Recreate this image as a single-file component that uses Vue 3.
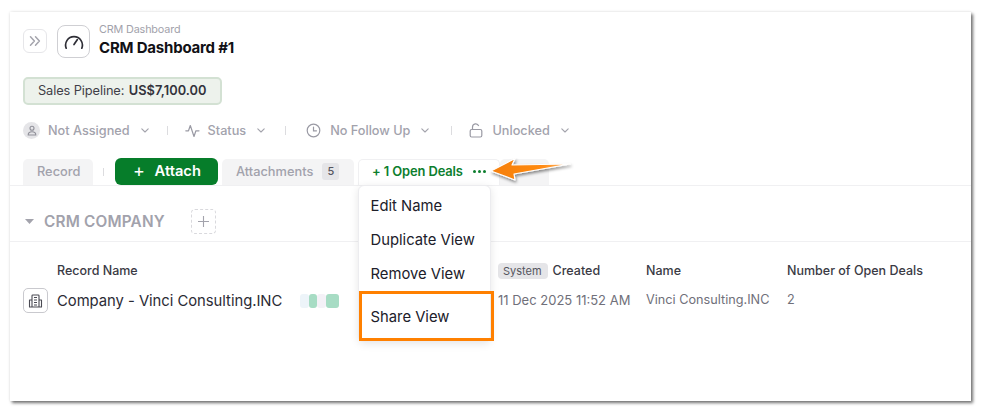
<script setup>
const filters = [
  { label: 'Not Assigned', icon: 'user' },
  { label: 'Status', icon: 'pulse' },
  { label: 'No Follow Up', icon: 'clock' },
  { label: 'Unlocked', icon: 'lock' }
]
const menu = ['Edit Name', 'Duplicate View', 'Remove View', 'Share View']
</script>

<template>
  <div class="page">
    <main class="card">
      <header class="head">
        <button class="toggle" aria-label="Expand">
          <svg width="14" height="14" viewBox="0 0 14 14" fill="none" stroke="#a4a4ac" stroke-width="1.5" stroke-linecap="round" stroke-linejoin="round"><path d="M2.500 2.800 6.400 7l-3.900 4.200M7.500 2.800 11.400 7l-3.900 4.200"/></svg>
        </button>
        <div class="gauge">
          <svg width="20" height="16" viewBox="0 0 20 16" fill="none" stroke="#2e2e36" stroke-width="1.700" stroke-linecap="round"><path d="M2.200 14.200A8.400 8.400 0 1 1 17.800 14.200"/><path d="M10 10.500 13.400 5.600"/></svg>
        </div>
        <div class="titles">
          <div class="crumb">CRM Dashboard</div>
          <div class="title">CRM Dashboard #1</div>
        </div>
      </header>

      <div class="pill">Sales Pipeline: <b>US$7,100.00</b></div>

      <div class="filters">
        <template v-for="(f, i) in filters" :key="f.label">
          <span v-if="i" class="vsep"></span>
          <div class="filter" :class="'f' + i">
            <span v-if="f.icon === 'user'" class="avatar">
              <svg width="10" height="11" viewBox="0 0 10 11" fill="none" stroke="#8f8f98" stroke-width="1.100"><circle cx="5" cy="3.200" r="2"/><path d="M1.200 10c0-2.200 1.600-3.200 3.800-3.200S8.800 7.800 8.800 10z"/></svg>
            </span>
            <svg v-if="f.icon === 'pulse'" width="15" height="15" viewBox="0 0 15 15" fill="none" stroke="#9a9aa4" stroke-width="1.200" stroke-linejoin="round" stroke-linecap="round"><path d="M.8 7.800H3.500L5.300 2.500 9 13.500l1.900-5.700H14"/></svg>
            <svg v-if="f.icon === 'clock'" width="15" height="15" viewBox="0 0 15 15" fill="none" stroke="#9a9aa4" stroke-width="1.200" stroke-linecap="round"><circle cx="7.500" cy="7.500" r="6.300"/><path d="M7.500 4v3.800h3"/></svg>
            <svg v-if="f.icon === 'lock'" width="14" height="15" viewBox="0 0 14 15" fill="none" stroke="#9a9aa4" stroke-width="1.200"><rect x="1.200" y="6.500" width="11.600" height="7.500" rx="1.500"/><path d="M3.500 6.500V4a3.200 3.200 0 0 1 6.200-1"/></svg>
            <span class="flabel">{{ f.label }}</span>
            <svg class="chev" width="8" height="5" viewBox="0 0 8 5" fill="none" stroke="#a3a3ac" stroke-width="1.100" stroke-linecap="round" stroke-linejoin="round"><path d="M.8.8 4 4 7.200.8"/></svg>
          </div>
        </template>
      </div>

      <nav class="tabs">
        <div class="tab record">Record</div>
        <span class="tabsep"></span>
        <button class="attach"><span class="plus">+</span> Attach</button>
        <div class="tab attachments">Attachments <span class="count">5</span></div>
        <div class="tab active">+ 1 Open Deals <span class="dots"><i></i><i></i><i></i></span></div>
        <div class="tab ghost"></div>
      </nav>

      <section class="section">
        <svg class="caret" width="9" height="5" viewBox="0 0 9 5"><path d="M0 0h9L4.500 5z" fill="#a3a3ac"/></svg>
        <span class="sname">CRM COMPANY</span>
        <span class="addbox">
          <svg width="13" height="13" viewBox="0 0 13 13" stroke="#a3a3ac" stroke-width="1.100"><path d="M6.500 1v11M1 6.500h11"/></svg>
        </span>
      </section>

      <div class="table">
        <div class="col c1">
          <div class="th">Record Name</div>
          <div class="td name">
            <span class="building">
              <svg width="15" height="15" viewBox="0 0 15 15" fill="none" stroke="#4a4a53" stroke-width="1.100" stroke-linejoin="round"><path d="M4 14V2.800a.8.8 0 0 1 .8-.8h5.400a.8.8 0 0 1 .8.8V14M4 7H1.500v7h12V7H11M6 4.500h3M6 7h3M6 9.500h3M6 12h3"/></svg>
            </span>
            <span>Company - Vinci Consulting.INC</span>
            <span class="chips"><i class="a"></i><i class="b"></i><i class="c"></i><i class="d"></i></span>
          </div>
        </div>
        <div class="col c2">
          <div class="th"><span class="sys">System</span> Created</div>
          <div class="td">11 Dec 2025 11:52 AM</div>
        </div>
        <div class="col c3">
          <div class="th">Name</div>
          <div class="td">Vinci Consulting.INC</div>
        </div>
        <div class="col c4">
          <div class="th">Number of Open Deals</div>
          <div class="td">2</div>
        </div>
      </div>

      <ul class="menu">
        <li v-for="m in menu" :key="m" :class="{ share: m === 'Share View' }">{{ m }}</li>
      </ul>
      <div class="highlight"></div>
      <svg class="arrow" width="90" height="32" viewBox="0 0 90 32">
        <defs>
          <linearGradient id="ag" x1="0" x2="1" y1="0" y2="0">
            <stop offset="0" stop-color="#f57f0a"/>
            <stop offset="0.65" stop-color="#ff8a12"/>
            <stop offset="1" stop-color="#ffc07a"/>
          </linearGradient>
          <filter id="as" x="-10%" y="-30%" width="125%" height="170%">
            <feDropShadow dx="1" dy="2" stdDeviation="1.500" flood-color="#000" flood-opacity=".45"/>
          </filter>
        </defs>
        <path d="M2 13 26 .5 23 7 81 6 25 16 26 22z" fill="url(#ag)" stroke="#fff" stroke-width="1.200" stroke-linejoin="round" filter="url(#as)"/>
      </svg>
    </main>
  </div>
</template>

<style>
html, body { margin: 0; background: #fff; }
</style>

<style scoped>
.page {
  width: 982px;
  height: 412px;
  padding: 12px 0 0 10px;
  box-sizing: border-box;
  overflow: hidden;
  font-family: Inter, "Liberation Sans", sans-serif;
}
.card {
  position: relative;
  width: 961px;
  height: 389px;
  background: #fff;
  box-shadow: 2px 2px 3px rgba(0, 0, 0, .55), 0 0 3px rgba(0, 0, 0, .1);
  box-sizing: border-box;
}
.head {
  display: flex;
  align-items: center;
  padding: 13px 0 0 13px;
  height: 33px;
}
.toggle {
  width: 24px;
  height: 24px;
  padding: 0;
  display: flex;
  align-items: center;
  justify-content: center;
  border: 1px solid #e6e6e9;
  border-radius: 6px;
  background: #fff;
  margin-top: -1px;
}
.gauge {
  width: 33px;
  height: 33px;
  margin-left: 10px;
  box-sizing: border-box;
  border: 1px solid #cfcfd3;
  border-radius: 8px;
  display: flex;
  align-items: center;
  justify-content: center;
}
.titles { margin-left: 9px; margin-top: -2px; }
.crumb { font-size: 10.800px; line-height: 14px; color: #a2a2ab; letter-spacing: -.15px; }
.title { font-size: 15px; line-height: 20px; font-weight: 700; color: #111116; letter-spacing: -.2px; margin-top: 1px; }
.pill {
  margin: 19px 0 0 13px;
  width: 199px;
  height: 28px;
  box-sizing: border-box;
  background: #edf2ec;
  border: 2px solid #d3e1d3;
  border-radius: 5px;
  font-size: 12.800px;
  line-height: 24px;
  padding-left: 13px;
  color: #3f3f48;
  white-space: nowrap;
  letter-spacing: -.1px;
}
.pill b { color: #33333c; font-weight: 600; margin-left: 1px; letter-spacing: .03px; }
.filters {
  display: flex;
  align-items: center;
  height: 18px;
  margin: 16px 0 0 13px;
}
.filter { display: flex; align-items: center; }
.flabel { font-size: 12.700px; font-weight: 500; color: #a2a2ac; white-space: nowrap; }
.f0 .flabel { margin-left: 8px; }
.f1 .flabel { margin-left: 8px; }
.f1 .chev { margin-right: 2px; }
.f2 { margin-left: 3px; }
.f2 .flabel { margin-left: 9px; }
.f3 .flabel { margin-left: 9px; }
.chev { margin-left: 11px; }
.f2 .chev { margin-right: 4px; }
.avatar {
  width: 17px;
  height: 17px;
  border-radius: 50%;
  background: #e5e5e8;
  display: flex;
  align-items: center;
  justify-content: center;
}
.vsep { width: 1px; height: 9px; background: #dcdcdf; margin: 0 17px 0 18px; }
.tabs {
  display: flex;
  align-items: flex-end;
  height: 27px;
  margin-top: 19px;
  padding-left: 13px;
  border-bottom: 1px solid #f0f0f2;
  box-sizing: content-box;
  position: relative;
}
.tab {
  height: 26px;
  box-sizing: border-box;
  background: #f4f4f5;
  border-radius: 5px 5px 0 0;
  font-size: 12.800px;
  font-weight: 500;
  line-height: 25px;
  color: #a2a2ac;
  white-space: nowrap;
}
.record { width: 70px; padding-left: 14px; }
.tabsep { width: 1px; height: 8px; background: #dcdcdf; margin: 0 11px 9px 10px; }
.attach {
  width: 103px;
  height: 27px;
  border: 0;
  border-radius: 6px;
  background: #067d2a;
  color: #fff;
  font: 600 14.700px/27px Inter, "Liberation Sans", sans-serif;
  padding: 0 0 0 18px;
  text-align: left;
  margin-right: 4px;
  white-space: nowrap;
}
.plus { font-weight: 400; font-size: 18px; margin-right: 6px; line-height: 20px; vertical-align: -1px; }
.attachments { width: 132px; padding: 0 0 2px 14px; display: flex; align-items: center; }
.count {
  margin-left: 9px;
  width: 17px;
  height: 17px;
  border-radius: 3px;
  background: #e5e5e8;
  color: #55555e;
  font-size: 11px;
  line-height: 17px;
  text-align: center;
}
.active {
  width: 142px;
  margin-left: 4px;
  background: #fff;
  border: 1px solid #f0f0f2;
  border-bottom: 0;
  color: #0c7e2e;
  font-size: 12.900px;
  font-weight: 600;
  padding: 0 0 2px 13px;
  letter-spacing: -.1px;
  display: flex;
  align-items: center;
}
.dots { display: inline-flex; gap: 2px; margin-left: 10px; }
.dots i { width: 3px; height: 3px; border-radius: 50%; background: #0c7e2e; }
.ghost { width: 49px; }
.section {
  display: flex;
  align-items: center;
  height: 56px;
  padding: 15px 0 0 15px;
  border-bottom: 1px solid #f0f0f2;
  box-sizing: border-box;
}
.caret { margin-right: 10px; }
.sname { font-size: 15.300px; font-weight: 600; color: #a2a2ac; letter-spacing: .2px; white-space: nowrap; }
.addbox {
  width: 25px;
  height: 25px;
  margin-left: 26px;
  box-sizing: border-box;
  border: 1px dashed #d9d9dd;
  border-radius: 4px;
  display: flex;
  align-items: center;
  justify-content: center;
}
.table { display: flex; padding-top: 20px; }
.th { font-size: 12.500px; line-height: 17px; font-weight: 500; color: #3a3a44; white-space: nowrap; height: 17px; display: flex; align-items: center; }
.td { font-size: 12.700px; line-height: 24px; color: #70707a; margin-top: 9px; white-space: nowrap; }
.c1 { width: 488px; padding-left: 13px; box-sizing: border-box; }
.c1 .th { padding-left: 34px; }
.name { display: flex; align-items: center; color: #2b2b35; font-size: 14.850px; font-weight: 400; letter-spacing: -.05px; }
.building {
  width: 25px;
  height: 25px;
  margin-right: 9px;
  box-sizing: border-box;
  border: 1px solid #c9c9ce;
  border-radius: 5px;
  display: flex;
  align-items: center;
  justify-content: center;
}
.chips { display: flex; margin-left: 18px; }
.chips i { height: 14px; border-radius: 3px; }
.chips .a { background: #edf4f9; width: 9px; }
.chips .b { background: #a7dcc4; width: 8px; }
.chips .c { background: #f4f1f7; width: 9px; }
.chips .d { background: #a7dcc4; width: 13px; }
.c2 { width: 148px; }
.c2 .td { font-size: 13px; }
.sys {
  background: #e5e5e8;
  color: #55555e;
  font-size: 11px;
  border-radius: 4px;
  padding: 0 6px 0 5px;
  line-height: 16px;
  height: 16px;
  margin-right: 5px;
  font-weight: 400;
}
.c3 { width: 141px; }
.menu {
  position: absolute;
  left: 348px;
  top: 173px;
  width: 133px;
  height: 157px;
  margin: 0;
  padding: 3px 0 0;
  list-style: none;
  box-sizing: border-box;
  background: #fff;
  border: 1px solid #ececef;
  border-radius: 6px;
  box-shadow: 0 2px 8px rgba(0, 0, 0, .1);
  font-size: 14.800px;
  color: #20202a;
}
.menu li { height: 34px; line-height: 34px; padding-left: 11.500px; white-space: nowrap; }
.menu .share { margin-top: 9px; }
.highlight {
  position: absolute;
  left: 349px;
  top: 279px;
  width: 135px;
  height: 50px;
  box-sizing: border-box;
  border: 3px solid #ff8000;
}
.arrow { position: absolute; left: 479px; top: 146px; }
</style>
